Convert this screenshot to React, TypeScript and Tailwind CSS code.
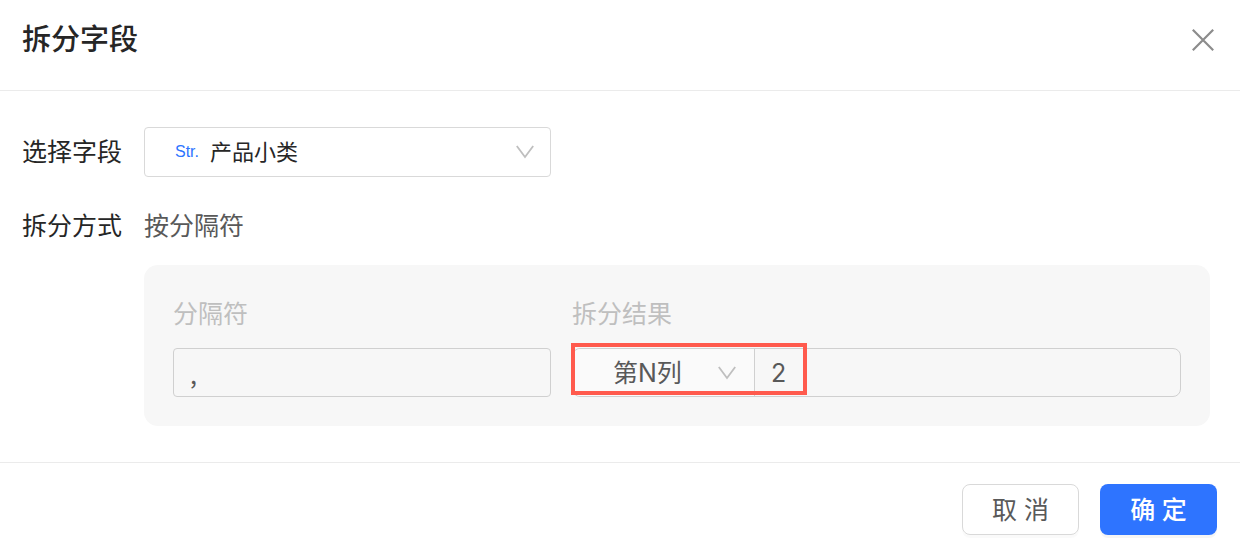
import {useState} from "react";

type IconProps = {
    className?: string;
}

function ChevronIcon(props: IconProps) {
    return (
        <svg viewBox="0 0 18 14" fill="none" stroke="#bfbfbf" strokeWidth="1.8" aria-hidden="true"
             className={`pointer-events-none absolute h-[14px] w-[18px] ${props.className ?? ''}`}>
            <path d="M0.8 1L9 12L17.2 1"/>
        </svg>
    )
}

function CloseIcon() {
    return (
        <svg width="22" height="22" viewBox="0 0 22 22" fill="none" stroke="#8c8c8c" strokeWidth="2.2" aria-hidden="true">
            <path d="M0.8 0.8L21.2 21.2M21.2 0.8L0.8 21.2"/>
        </svg>
    )
}

export default function App() {
    const [field, setField] = useState("产品小类");
    const [separator, setSeparator] = useState(",");
    const [mode, setMode] = useState("第N列");
    const [column, setColumn] = useState("2");

    return (
        <div className="w-full bg-white font-[Inter,'Noto_Sans_CJK_SC',sans-serif] text-[25px] leading-8 text-[#262626]">
            <header className="flex h-[91px] items-center justify-between border-b border-[#ebebeb] pr-[26px] pb-[10px] pl-[22px]">
                <h1 className="text-[29px] leading-10 font-medium">拆分字段</h1>
                <button type="button" aria-label="关闭"><CloseIcon/></button>
            </header>

            <main className="pt-9 pr-[30px] pb-9 pl-[22px]">
                <div className="flex items-center">
                    <label htmlFor="field" className="w-[122px] shrink-0">选择字段</label>
                    <div className="relative flex h-[50px] w-[407px] items-center rounded-[4px] border border-[#d9d9d9] pl-[30px]">
                        <span className="w-[35px] font-['Liberation_Sans',sans-serif] text-base text-[#2e74ff]">Str.</span>
                        <select id="field" value={field} onChange={(e) => setField(e.target.value)}
                                className="h-full flex-1 appearance-none bg-transparent text-[22px] outline-none">
                            <option>产品小类</option>
                        </select>
                        <ChevronIcon className="right-4"/>
                    </div>
                </div>

                <div className="mt-[33px] flex">
                    <div className="w-[122px] shrink-0">拆分方式</div>
                    <div className="min-w-0 flex-1 text-[#595959]">
                        <div>按分隔符</div>
                        <div className="mt-[23px] flex gap-[21px] rounded-[14px] bg-[#f7f7f7] px-[29px] pt-[33px] pb-[29px]">
                            <div className="w-[378px]">
                                <label htmlFor="separator" className="block text-[#bfbfbf]">分隔符</label>
                                <input id="separator" value={separator} onChange={(e) => setSeparator(e.target.value)}
                                       className="mt-[18px] block h-[49px] w-full rounded-[4px] border border-[#d0d0d0] px-4 font-['Noto_Sans_CJK_SC',sans-serif] outline-none"/>
                            </div>
                            <div className="min-w-0 flex-1">
                                <label htmlFor="mode" className="block text-[#bfbfbf]">拆分结果</label>
                                <div className="relative mt-[18px] flex h-[49px] rounded-lg border border-[#d0d0d0]">
                                    <div className="relative flex w-[182px] items-center rounded-l-lg border-r border-[#d0d0d0] bg-[#fafafa]">
                                        <select id="mode" value={mode} onChange={(e) => setMode(e.target.value)}
                                                className="h-full w-full appearance-none bg-transparent pl-10 outline-none">
                                            <option>第N列</option>
                                        </select>
                                        <ChevronIcon className="right-[18px]"/>
                                    </div>
                                    <input aria-label="列数" value={column} onChange={(e) => setColumn(e.target.value)}
                                           className="min-w-0 flex-1 bg-transparent px-4 outline-none"/>
                                    <div className="pointer-events-none absolute -top-[6px] -left-[2px] h-[52px] w-[236px] border-4 border-[#ff5a4d]"/>
                                </div>
                            </div>
                        </div>
                    </div>
                </div>
            </main>

            <footer className="flex justify-end gap-[21px] border-t border-[#ebebeb] pt-[21px] pr-[23px] pb-[11px]">
                <button type="button" className="h-[51px] w-[117px] rounded-lg border border-[#d9d9d9] text-[#595959] shadow-[0_3px_0_rgba(0,0,0,0.02)]">取 消</button>
                <button type="button" className="h-[51px] w-[117px] rounded-lg bg-[#2e74ff] font-medium text-white shadow-[0_3px_0_rgba(0,0,0,0.04)]">确 定</button>
            </footer>
        </div>
    )
}
